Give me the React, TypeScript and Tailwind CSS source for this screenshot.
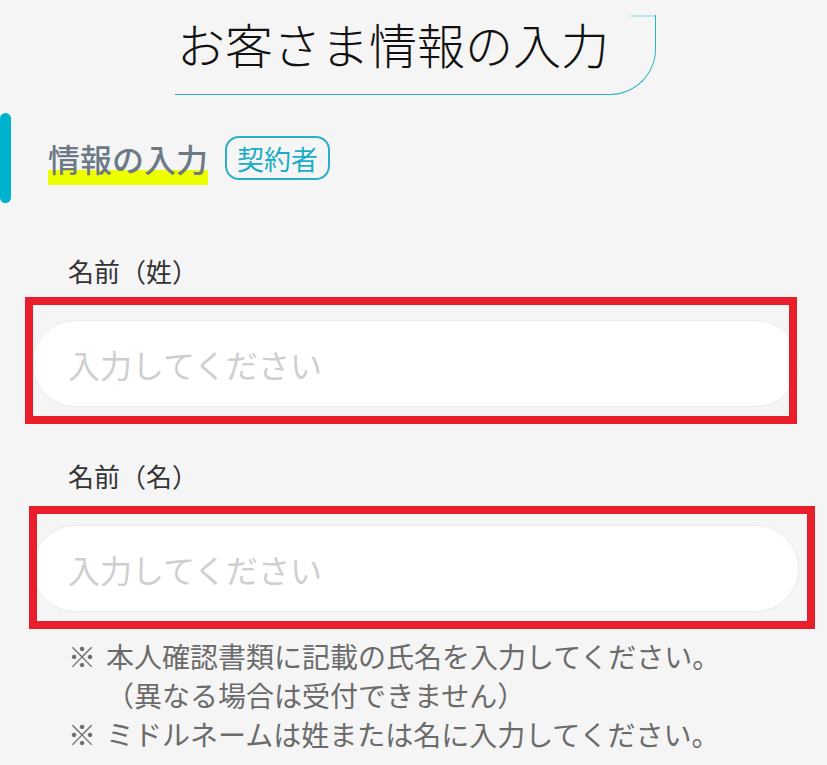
import React from "react";

const font = "font-['Noto_Sans_CJK_JP','Noto_Sans',sans-serif]";

function Field({ label, frame }: { label: string; frame: string }) {
  return (
    <div>
      <p className="pl-[68px] text-[26px] leading-[40px] text-[#333]">{label}</p>
      <div className="relative ml-[32px] mt-[29px] w-[767px]">
        <input
          type="text"
          placeholder="入力してください"
          className="block h-[87px] w-full rounded-full border border-[#ececec] bg-white pl-[35px] text-[32px] text-[#333] outline-none placeholder:text-[#cfcfcf]"
        />
        <div className={`pointer-events-none absolute border-[8px] border-[#e81f2a] ${frame}`} />
      </div>
    </div>
  );
}

export default function App() {
  return (
    <div className={`min-h-[765px] w-[827px] overflow-hidden bg-[#f5f5f5] ${font}`}>
      {/* page title */}
      <div className="pl-[175px] pt-[15px]">
        <div className="relative h-[80px] w-[481px] rounded-br-[46px] border-b-[1.5px] border-r-[1.5px] border-[#2ab3c8]">
          <span className="absolute right-0 top-0 h-[1.5px] w-[24px] bg-[#bfe5ec]" />
          <h1 className="pl-[2px] text-[48px] font-extralight leading-[56px] text-[#111]">
            お客さま情報の入力
          </h1>
        </div>
      </div>

      {/* section heading */}
      <div className="mt-[18px] flex h-[90px] items-center">
        <div className="h-full w-[11px] rounded-[6px] bg-[#00b2ce]" />
        <h2 className="relative ml-[37px] inline-block text-[32px] font-medium leading-[40px] text-[#6d7a86]">
          <span className="absolute bottom-[-7px] left-0 h-[15px] w-[160px] bg-[#eeff00]" />
          <span className="relative">情報の入力</span>
        </h2>
        <span className="ml-[17px] flex h-[44px] items-center rounded-[14px] border-2 border-[#2ab0c6] px-[10px] text-[27px] leading-none text-[#1aaec4]">
          契約者
        </span>
      </div>

      <div className="mt-[48px]">
        <Field label="名前（姓）" frame="-left-[7px] -top-[23px] right-[2px] -bottom-[17px]" />
      </div>
      <div className="mt-[49px]">
        <Field label="名前（名）" frame="-left-[3px] -top-[19px] -right-[16px] -bottom-[17px]" />
      </div>

      {/* notes */}
      <div className="mt-[25px] pl-[68px] text-[28px] leading-[39px] text-[#6b6b6b]">
        <div className="flex">
          <span className="w-[38px] shrink-0">※</span>
          <p>
            本人確認書類に記載の氏名を入力してください。
            <br />
            （異なる場合は受付できません）
          </p>
        </div>
        <div className="flex">
          <span className="w-[38px] shrink-0">※</span>
          <p>ミドルネームは姓または名に入力してください。</p>
        </div>
      </div>
    </div>
  );
}
